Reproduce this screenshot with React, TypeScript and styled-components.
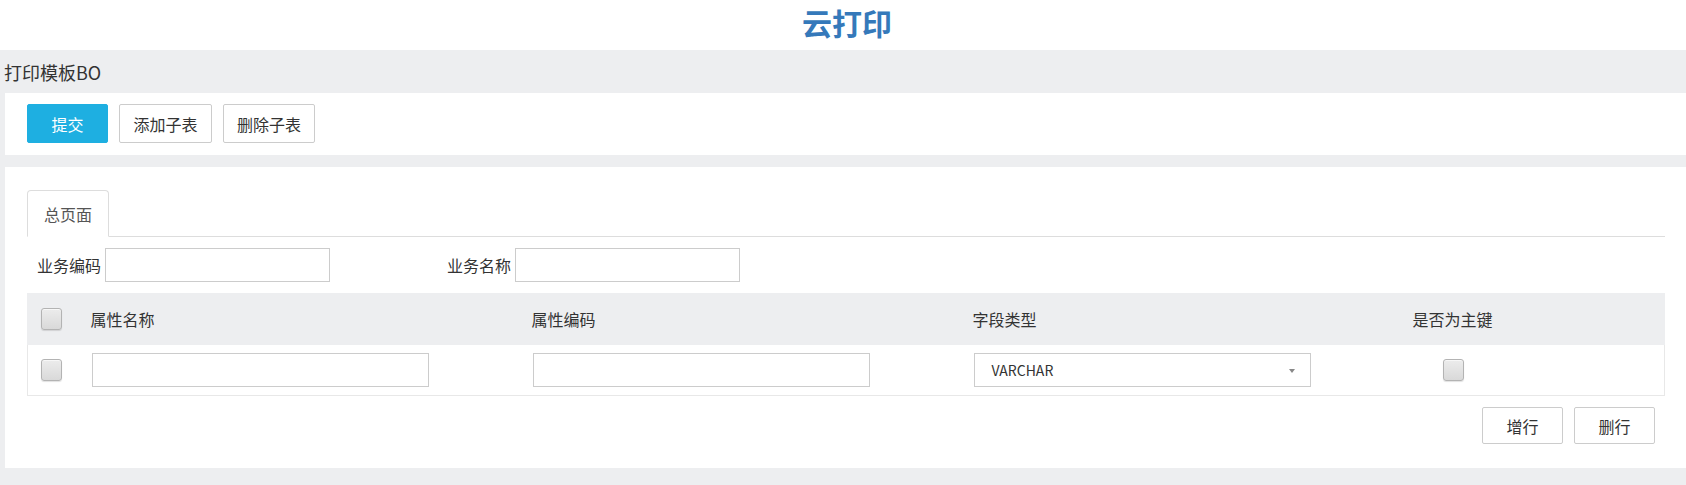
import React from "react";
import styled, { createGlobalStyle } from "styled-components";

const GlobalStyle = createGlobalStyle`
  html, body {
    margin: 0;
    padding: 0;
  }
  body {
    background: #edeef0;
    color: #333;
    font-family: "Noto Sans CJK SC", "Noto Sans", sans-serif;
    font-size: 16px;
  }
  * { box-sizing: border-box; }
`;

const Header = styled.header`
  height: 50px;
  background: #fff;
  display: flex;
  justify-content: center;
  align-items: flex-start;
  padding-left: 8px;
`;

const AppTitle = styled.h1`
  margin: 0;
  font-size: 30px;
  line-height: 44px;
  font-weight: 700;
  color: #3579ba;
`;

const SectionTitle = styled.div`
  height: 43px;
  padding-left: 4px;
  display: flex;
  align-items: center;
  font-size: 18px;
  color: #333;
`;

const Panel = styled.section<{ $pad: string; $mt?: number }>`
  margin-left: 5px;
  margin-top: ${(p) => p.$mt ?? 0}px;
  background: #fff;
  padding: ${(p) => p.$pad};
`;

const Toolbar = styled.div`
  display: flex;
  gap: 11px;
`;

const Button = styled.button<{ $primary?: boolean; $w: number; $h: number }>`
  width: ${(p) => p.$w}px;
  height: ${(p) => p.$h}px;
  padding: 0;
  font-family: inherit;
  font-size: 16px;
  border-radius: 2px;
  cursor: pointer;
  border: 1px solid ${(p) => (p.$primary ? "#1eafe1" : "#cccccc")};
  background: ${(p) => (p.$primary ? "#1eafe1" : "#fff")};
  color: ${(p) => (p.$primary ? "#fff" : "#333")};
`;

const TabBar = styled.div`
  display: flex;
  height: 47px;
  border-bottom: 1px solid #dddddd;
`;

const Tab = styled.div`
  width: 82px;
  height: 47px;
  margin-bottom: -1px;
  border: 1px solid #dddddd;
  border-bottom-color: #fff;
  border-radius: 4px 4px 0 0;
  background: #fff;
  display: flex;
  align-items: center;
  justify-content: center;
  font-size: 16px;
  color: #555;
`;

const FormRow = styled.div`
  display: flex;
  margin-top: 11px;
`;

const Field = styled.label`
  width: 410px;
  padding-left: 10px;
  display: flex;
  align-items: center;
  gap: 4px;
  font-size: 16px;
`;

const TextInput = styled.input<{ $w: number }>`
  width: ${(p) => p.$w}px;
  height: 34px;
  border: 1px solid #cccccc;
  border-radius: 0;
  padding: 0 10px;
  font-family: inherit;
  font-size: 14px;
  outline: none;
`;

const Table = styled.div`
  margin-top: 11px;
`;

const cols = "63.5px 441px 441px 440px 1fr";

const HeadRow = styled.div`
  display: grid;
  grid-template-columns: ${cols};
  align-items: center;
  height: 52px;
  background: #edeef0;
  font-size: 16px;
`;

const BodyRow = styled.div`
  display: grid;
  grid-template-columns: ${cols};
  align-items: center;
  height: 51px;
  border: 1px solid #e8e8e8;
  border-top: none;
`;

const Cell = styled.div<{ $pl?: number }>`
  padding-left: ${(p) => p.$pl ?? 0}px;
  display: flex;
  align-items: center;
`;

const Check = styled.span`
  display: inline-block;
  width: 21px;
  height: 22px;
  border: 1px solid #b3b3b3;
  border-radius: 3px;
  background: linear-gradient(#ececec, #d9d9d9);
  box-shadow: inset 0 1px 0 #f7f7f7, 0 1px 1px rgba(0, 0, 0, 0.12);
`;

const Select = styled.div`
  position: relative;
  width: 337px;
  height: 34px;
  border: 1px solid #cccccc;
  padding-left: 17px;
  display: flex;
  align-items: center;
  font-size: 14px;
  color: #333;
`;

const Caret = styled.span`
  position: absolute;
  right: 15px;
  top: 15px;
  width: 0;
  height: 0;
  border-left: 3.5px solid transparent;
  border-right: 3.5px solid transparent;
  border-top: 4px solid #888;
`;

const Actions = styled.div`
  display: flex;
  justify-content: flex-end;
  gap: 11px;
  margin-top: 11px;
  padding-right: 10px;
`;

export default function App() {
  return (
    <>
      <GlobalStyle />
      <Header>
        <AppTitle>云打印</AppTitle>
      </Header>
      <SectionTitle>打印模板BO</SectionTitle>
      <Panel $pad="11px 22px 12px">
        <Toolbar>
          <Button $primary $w={81} $h={39}>提交</Button>
          <Button $w={93} $h={39}>添加子表</Button>
          <Button $w={92} $h={39}>删除子表</Button>
        </Toolbar>
      </Panel>
      <Panel $pad="23px 21px 24px 22px" $mt={12}>
        <TabBar>
          <Tab>总页面</Tab>
        </TabBar>
        <FormRow>
          <Field>
            业务编码
            <TextInput $w={225} />
          </Field>
          <Field>
            业务名称
            <TextInput $w={225} />
          </Field>
        </FormRow>
        <Table>
          <HeadRow>
            <Cell $pl={14}><Check /></Cell>
            <Cell>属性名称</Cell>
            <Cell>属性编码</Cell>
            <Cell>字段类型</Cell>
            <Cell>是否为主键</Cell>
          </HeadRow>
          <BodyRow>
            <Cell $pl={13}><Check /></Cell>
            <Cell><TextInput $w={337} /></Cell>
            <Cell><TextInput $w={337} /></Cell>
            <Cell>
              <Select>
                VARCHAR
                <Caret />
              </Select>
            </Cell>
            <Cell $pl={29}><Check /></Cell>
          </BodyRow>
        </Table>
        <Actions>
          <Button $w={81} $h={37}>增行</Button>
          <Button $w={81} $h={37}>删行</Button>
        </Actions>
      </Panel>
    </>
  );
}
